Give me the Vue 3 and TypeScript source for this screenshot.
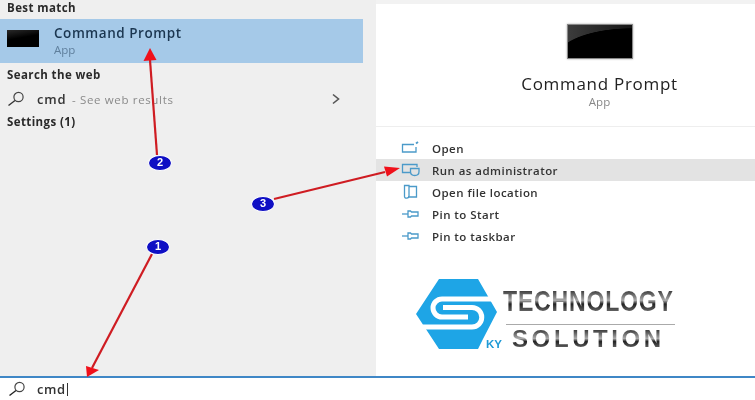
<script setup lang="ts">
const actions = [
  { label: 'Open', icon: 'open', active: false },
  { label: 'Run as administrator', icon: 'admin', active: true },
  { label: 'Open file location', icon: 'file', active: false },
  { label: 'Pin to Start', icon: 'pin', active: false },
  { label: 'Pin to taskbar', icon: 'pin', active: false },
]
const badges = [
  { n: 1, x: 158, y: 247 },
  { n: 2, x: 160, y: 163 },
  { n: 3, x: 263, y: 204 },
]
</script>

<template>
  <div class="screen">
    <div class="panes">
      <section class="left">
        <h2 class="head first">Best match</h2>
        <div class="best">
          <div class="thumb"></div>
          <div class="best-text">
            <div class="best-title">Command Prompt</div>
            <div class="best-sub">App</div>
          </div>
        </div>
        <h2 class="head web">Search the web</h2>
        <div class="web-row">
          <svg class="glass" width="20" height="16" viewBox="0 0 20 16">
            <circle cx="12.5" cy="6" r="4.6" fill="none" stroke="#444" stroke-width="1.2" />
            <path d="M9 9.5 L2.5 14.5" stroke="#333" stroke-width="1.4" fill="none" />
          </svg>
          <span class="cmd">cmd</span>
          <span class="see">&nbsp;- See web results</span>
          <svg class="chev" width="10" height="12" viewBox="0 0 10 12">
            <path d="M2 1.5 L7.5 6 L2 10.5" fill="none" stroke="#555" stroke-width="1.6" />
          </svg>
        </div>
        <h2 class="head settings">Settings (1)</h2>
      </section>

      <section class="right">
        <div class="hero">
          <div class="big-thumb"></div>
          <div class="hero-title">Command Prompt</div>
          <div class="hero-sub">App</div>
        </div>
        <ul class="actions">
          <li v-for="a in actions" :key="a.label" class="action" :class="{ active: a.active }">
            <svg class="a-icon" width="20" height="16" viewBox="0 0 20 16" fill="none" stroke="#4b9ac9" stroke-width="1.3">
              <template v-if="a.icon === 'open'">
                <path d="M13 4.5 H1.5 V12 H15 V7" />
                <path d="M15 3.5 L17 2" stroke-width="1.8" />
              </template>
              <template v-else-if="a.icon === 'admin'">
                <path d="M9 10.5 H1.5 V2.5 H16 V5" />
                <path d="M9.5 6.5 H18 V9.5 C18 12.5 15.5 13.5 13.7 13.5 C12 13.5 9.5 12.5 9.5 9.5 Z" />
              </template>
              <template v-else-if="a.icon === 'file'">
                <path d="M3.5 1.5 H8 V12 C8 14.5 3.5 15 3.5 12.5 Z" />
                <path d="M8 2.5 H15.5 V13 H7" />
              </template>
              <template v-else>
                <path d="M1 8 H7" />
                <path d="M7 5 H9.5 L10.5 6 H17 V10 H10.5 L9.5 11 H7 Z" />
              </template>
            </svg>
            <span>{{ a.label }}</span>
          </li>
        </ul>
        <div class="logo">
          <svg class="mark" width="90" height="72" viewBox="0 0 90 72">
            <path d="M23 0 H62 L81 33 L67 60 L62 70 H23 L0 35 Z" fill="#1ea5e6" />
            <path d="M76 20 H26 A9 9 0 0 0 26 38 H52" fill="none" stroke="#fff" stroke-width="5" />
            <path d="M27 28.5 H56 A9.5 9.5 0 0 1 56 48 H7" fill="none" stroke="#fff" stroke-width="5" />
            <text x="70" y="69" class="ky">KY</text>
          </svg>
          <div class="words">
            <div class="tech">TECHNOLOGY</div>
            <div class="rule"></div>
            <div class="solution">SOLUTION</div>
          </div>
        </div>
      </section>
    </div>

    <div class="search">
      <svg width="20" height="16" viewBox="0 0 20 16">
        <circle cx="12.5" cy="6" r="4.6" fill="none" stroke="#444" stroke-width="1.2" />
        <path d="M9 9.5 L2.5 14.5" stroke="#222" stroke-width="1.4" fill="none" />
      </svg>
      <span class="typed">cmd</span><span class="caret"></span>
    </div>

    <svg class="arrows" width="755" height="400" viewBox="0 0 755 400">
      <g stroke="#cf1c22" stroke-width="2.2" fill="none">
        <path d="M157 155 L150 60" />
        <path d="M152 254 L92 368" />
        <path d="M274 199 L385 172" />
      </g>
      <g fill="#f0101a">
        <path d="M150 48 L143.5 61 L156.5 60 Z" />
        <path d="M87 377 L86 366 L99 370 Z" />
        <path d="M400 168 L384 166.5 L387 176.5 Z" />
      </g>
    </svg>
    <div v-for="b in badges" :key="b.n" class="badge" :style="{ left: b.x - 12 + 'px', top: b.y - 8 + 'px' }">{{ b.n }}</div>
  </div>
</template>

<style>
html, body { margin: 0; background: #fff; }
</style>

<style scoped>
.screen {
  position: relative;
  width: 755px;
  height: 400px;
  overflow: hidden;
  display: flex;
  flex-direction: column;
  background: #fff;
  font-family: "Open Sans", "Noto Sans", sans-serif;
  color: #222;
  filter: blur(0.4px);
}
.panes { flex: 1; display: flex; min-height: 0; }
.left { width: 376px; flex: none; background: #efefef; box-sizing: border-box; }
.head { margin: 0; padding-left: 7px; font-size: 11.5px; line-height: 14px; font-weight: 700; color: #2a2a2a; letter-spacing: .4px; }
.first { padding-top: 1px; }
.best { width: 363px; height: 44px; margin-top: 4px; background: #a5c9e8; display: flex; align-items: center; }
.thumb { width: 32px; height: 17px; margin: 0 0 5px 7px; background: linear-gradient(170deg, #2a2a2a, #000 45%); }
.best-text { margin-left: 15px; }
.best-title { font-size: 13.5px; line-height: 18px; font-weight: 600; color: #1b3650; letter-spacing: .55px; }
.best-sub { font-size: 11.5px; line-height: 16px; color: #5f7f9c; }
.web { margin-top: 5px; }
.web-row { height: 24px; margin-top: 5px; padding-left: 6px; display: flex; align-items: center; width: 335px; font-size: 11px; }
.glass { flex: none; margin-right: 11px; }
.cmd { color: #333; font-size: 13px; font-weight: 600; letter-spacing: .8px; }
.see { color: #8a8a8a; font-size: 11.5px; letter-spacing: .65px; margin-left: 2px; }
.chev { margin-left: auto; }
.settings { margin-top: 4px; }

.right { flex: 1; display: flex; flex-direction: column; border-top: 4px solid #f2f2f2; min-width: 0; }
.hero { height: 122px; border-bottom: 1px solid #eee; display: flex; flex-direction: column; align-items: center; padding-left: 68px; }
.big-thumb {
  width: 64px;
  height: 33px;
  margin-top: 20px;
  border: 1px solid #888;
  background:
    radial-gradient(ellipse 76px 30px at 100% 100%, #000 98%, transparent 100%),
    linear-gradient(90deg, #3c3c3c, #151515);
  box-shadow: 0 0 2px #aaa;
}
.hero-title { margin-top: 14px; font-size: 17px; line-height: 22px; color: #222; letter-spacing: .7px; white-space: nowrap; }
.hero-sub { font-size: 11.5px; line-height: 16px; color: #888; margin-top: -1px; }
.actions { list-style: none; margin: 0; padding: 10px 0 0; }
.action { height: 22px; display: flex; align-items: center; padding-left: 25px; font-size: 11.5px; color: #333; letter-spacing: .45px; font-weight: 600; }
.action.active { background: #e3e3e3; }
.a-icon { flex: none; margin-right: 11px; }

.logo { display: flex; margin: 32px 0 0 40px; }
.mark { flex: none; }
.ky { font: 700 11.5px "Liberation Sans", sans-serif; fill: #1e9ad6; }
.words { margin-left: -3px; padding-top: 7px; width: 172px; }
.tech, .solution {
  font-family: "Liberation Sans", sans-serif;
  font-weight: 700;
  background: linear-gradient(180deg, #444 18%, #aaa 48%, #222 60%, #666 85%);
  -webkit-background-clip: text;
  background-clip: text;
  color: transparent;
  white-space: nowrap;
  width: max-content;
}
.tech { font-size: 30px; line-height: 30px; letter-spacing: 1px; transform: scaleX(.77); transform-origin: left; }
.rule { height: 1px; background: #aaa; margin: 8px 0 0 3px; width: 169px; }
.solution { margin: 1px 0 0 9px; font-size: 24px; line-height: 26px; letter-spacing: 3.6px; }

.search { height: 22px; border-top: 2px solid #3f87c6; flex: none; display: flex; align-items: center; padding-left: 7px; background: #fff; }
.typed { margin-left: 10px; font-size: 13px; font-weight: 600; color: #333; letter-spacing: .6px; }
.caret { width: 1px; height: 13px; background: #333; margin-left: 1px; }

.arrows { position: absolute; left: 0; top: 0; pointer-events: none; }
.badge {
  position: absolute;
  width: 24px;
  height: 16px;
  border-radius: 50%;
  background: #0f0fc4;
  border: 1.5px solid #fff;
  box-sizing: border-box;
  color: #fff;
  font: 700 11px/13px "Liberation Sans", sans-serif;
  text-align: center;
}
</style>
